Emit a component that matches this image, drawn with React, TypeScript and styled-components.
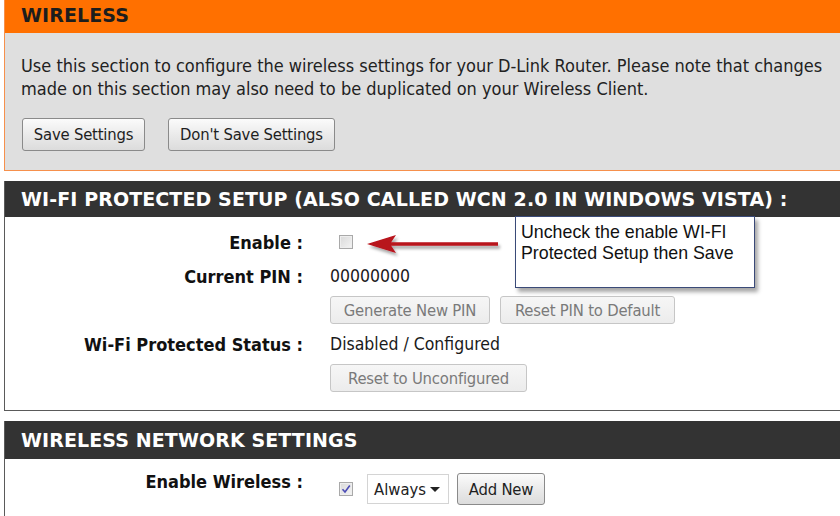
import React from "react";
import styled, { createGlobalStyle } from "styled-components";

const GlobalStyle = createGlobalStyle`
  html, body {
    margin: 0;
    padding: 0;
    background: #ffffff;
    overflow: hidden;
  }
  body {
    font-family: "DejaVu Sans Condensed", "DejaVu Sans", sans-serif;
    color: #222;
  }
`;

const Page = styled.div`
  position: relative;
  width: 860px;
  padding-left: 4px;
`;

const Section = styled.div<{ accent: string }>`
  border-left: 1px solid ${({ accent }) => accent};
  border-bottom: 1px solid ${({ accent }) => accent};
  margin-bottom: 10px;
`;

const SectionHead = styled.div<{ bg: string; fg: string; h: number; lift?: number }>`
  box-sizing: border-box;
  height: ${({ h }) => h}px;
  padding-bottom: ${({ lift }) => lift || 0}px;
  background: ${({ bg }) => bg};
  color: ${({ fg }) => fg};
  display: flex;
  align-items: center;
  padding-left: 16px;
  font-family: "DejaVu Sans", Verdana, sans-serif;
  font-weight: bold;
  font-size: 19px;
  letter-spacing: 0.1px;
`;

const IntroBody = styled.div`
  box-sizing: border-box;
  background: #dfdfdf;
  padding: 21px 0 0 16px;
  height: 137px;
`;

const Intro = styled.p`
  margin: 0;
  font-size: 18px;
  line-height: 23px;
  color: #222;
`;

const ButtonRow = styled.div`
  display: flex;
  gap: 23px;
  margin-top: 18px;
  padding-left: 1px;
`;

const Button = styled.div<{ disabled?: boolean; w?: number; h?: number }>`
  box-sizing: border-box;
  height: ${({ h, disabled }) => h || (disabled ? 28 : 33)}px;
  ${({ w }) => (w ? `width: ${w}px;` : "")}
  display: flex;
  align-items: center;
  justify-content: center;
  border-radius: 3px;
  border: 1px solid ${({ disabled }) => (disabled ? "#c6c6c6" : "#8a8a8a")};
  background: ${({ disabled }) =>
    disabled
      ? "linear-gradient(#f6f6f6, #ececec)"
      : "linear-gradient(#fbfbfb, #e9e9e9 55%, #dcdcdc)"};
  color: ${({ disabled }) => (disabled ? "#7a7a7a" : "#1e1e1e")};
  font-size: 16.5px;
  letter-spacing: -0.2px;
  white-space: nowrap;
`;

const PanelBody = styled.div<{ pb: number }>`
  background: #fff;
  padding: 8px 0 ${({ pb }) => pb}px 0;
`;

const Row = styled.div<{ h: number }>`
  display: grid;
  grid-template-columns: 298px 1fr;
  column-gap: 27px;
  align-items: center;
  height: ${({ h }) => h}px;
`;

const Label = styled.div<{ raise?: number }>`
  text-align: right;
  font-weight: bold;
  font-size: 18px;
  color: #111;
  padding-bottom: ${({ raise }) => raise || 0}px;
`;

const Value = styled.div`
  display: flex;
  align-items: center;
  gap: 10px;
  font-size: 17.5px;
  color: #1a1a1a;
`;

const Check = styled.span`
  box-sizing: border-box;
  width: 14px;
  height: 14px;
  margin-left: 9px;
  border: 1px solid #a9a9a9;
  background: linear-gradient(135deg, #d9d9d9, #f4f4f4);
  box-shadow: inset 0 0 0 1px #eeeeee;
  display: inline-flex;
  align-items: center;
  justify-content: center;
`;

const Controls = styled.div`
  display: flex;
  align-items: center;
  gap: 8px;
`;

const Select = styled.div`
  box-sizing: border-box;
  width: 82px;
  height: 30px;
  border: 1px solid #d4d4d4;
  background: #fff;
  display: flex;
  align-items: center;
  justify-content: space-between;
  padding: 0 8px 0 6px;
  font-size: 16.5px;
  margin-left: 6px;
  &::after {
    content: "";
    border-left: 5px solid transparent;
    border-right: 5px solid transparent;
    border-top: 5px solid #222;
  }
`;

const NextBox = styled.div`
  width: 350px;
  height: 10px;
  border: 1px solid #d4d4d4;
  border-bottom: none;
  margin-left: 6px;
  margin-top: 6px;
`;

const Tooltip = styled.div`
  position: absolute;
  left: 515px;
  top: 216px;
  width: 240px;
  height: 72px;
  box-sizing: border-box;
  background: #fff;
  border: 1px solid #3a4a78;
  box-shadow: 3px 4px 4px rgba(0, 0, 0, 0.35);
  padding: 5px 5px;
  font-family: "Liberation Sans", Arial, sans-serif;
  font-size: 17.8px;
  line-height: 21px;
  color: #111;
`;

const Arrow = styled.svg`
  position: absolute;
  left: 364px;
  top: 233px;
  overflow: visible;
`;

export default function App() {
  return (
    <>
      <GlobalStyle />
      <Page>
        <Section accent="#f6904c">
          <SectionHead bg="#ff7000" fg="#1d1d1d" h={33} lift={3}>
            WIRELESS
          </SectionHead>
          <IntroBody>
            <Intro>
              Use this section to configure the wireless settings for your D-Link Router. Please note that changes
              <br />
              made on this section may also need to be duplicated on your Wireless Client.
            </Intro>
            <ButtonRow>
              <Button w={123}>Save Settings</Button>
              <Button w={167}>Don't Save Settings</Button>
            </ButtonRow>
          </IntroBody>
        </Section>

        <Section accent="#5a5a5a">
          <SectionHead bg="#333333" fg="#ffffff" h={36}>
            WI-FI PROTECTED SETUP (ALSO CALLED WCN 2.0 IN WINDOWS VISTA) :
          </SectionHead>
          <PanelBody pb={15}>
            <Row h={34}>
              <Label>Enable :</Label>
              <Value>
                <Check />
              </Value>
            </Row>
            <Row h={34}>
              <Label>Current PIN :</Label>
              <Value>00000000</Value>
            </Row>
            <Row h={34}>
              <span />
              <Value>
                <Button disabled w={160}>Generate New PIN</Button>
                <Button disabled w={175}>Reset PIN to Default</Button>
              </Value>
            </Row>
            <Row h={34}>
              <Label>Wi-Fi Protected Status :</Label>
              <Value>Disabled / Configured</Value>
            </Row>
            <Row h={34}>
              <span />
              <Value>
                <Button disabled w={197}>Reset to Unconfigured</Button>
              </Value>
            </Row>
          </PanelBody>
        </Section>

        <Section accent="#5a5a5a">
          <SectionHead bg="#333333" fg="#ffffff" h={38}>
            WIRELESS NETWORK SETTINGS
          </SectionHead>
          <PanelBody pb={0}>
            <Row h={44}>
              <Label raise={16}>Enable Wireless :</Label>
              <Controls>
                <Check>
                  <svg width="10" height="10" viewBox="0 0 10 10">
                    <path d="M1.5 5.2 L4 8 L8.8 1.5" fill="none" stroke="#4b4bb5" strokeWidth="1.6" />
                  </svg>
                </Check>
                <Select>Always</Select>
                <Button w={88} h={32}>Add New</Button>
              </Controls>
            </Row>
            <Row h={20}>
              <span />
              <NextBox />
            </Row>
          </PanelBody>
        </Section>

        <Arrow width="140" height="24" viewBox="0 0 140 24">
          <defs>
            <filter id="sh" x="-10%" y="-50%" width="130%" height="250%">
              <feDropShadow dx="2" dy="3" stdDeviation="1.5" floodColor="#000" floodOpacity="0.35" />
            </filter>
          </defs>
          <g filter="url(#sh)">
            <line x1="24" y1="11" x2="134" y2="11" stroke="#b8121b" strokeWidth="3.5" />
            <path d="M3 11 L32 2 L26 11 L32 20 Z" fill="#b8121b" />
          </g>
        </Arrow>

        <Tooltip>
          Uncheck the enable WI-FI
          <br />
          Protected Setup then Save
        </Tooltip>
      </Page>
    </>
  );
}
